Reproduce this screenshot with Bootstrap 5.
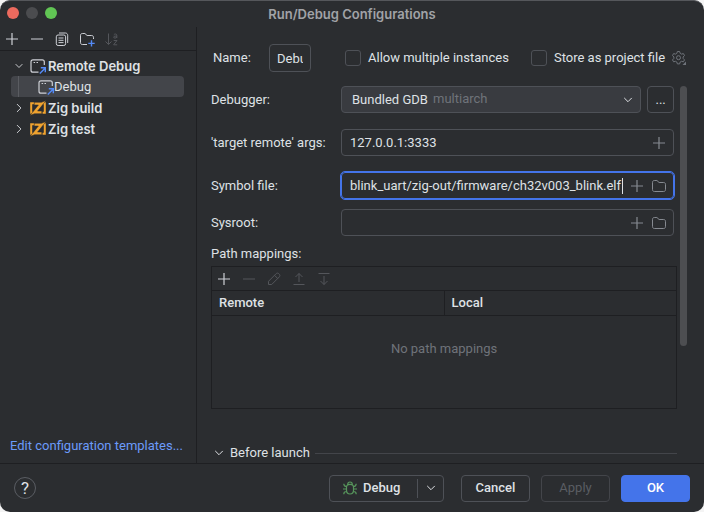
<!DOCTYPE html>
<html lang="en" data-bs-theme="dark">
<head>
<meta charset="utf-8">
<meta name="viewport" content="width=device-width, initial-scale=1">
<title>Run/Debug Configurations</title>
<link href="https://cdn.jsdelivr.net/npm/bootstrap@5.3.0/dist/css/bootstrap.min.css" rel="stylesheet">
<style>
:root{--ground:#2b2d30;--edge:#1e1f22;--line:#4e5157;--ink:#dfe1e5;--dim:#6f737a;--off:#54565b;--accent:#4474ea}
html{background:#f4f4f4}
body{background:transparent;color:var(--ink);font:13px/20px Roboto,"Liberation Sans",sans-serif}
svg{display:block;fill:none;stroke:currentColor;flex:none}
button{color:inherit;font:inherit;background:none;border:0;padding:0}
.dialog{background:var(--ground);border-radius:10px;border-top:1px solid #55575b;overflow:hidden}
.titlebar{height:26px;color:#a1a3a7}
.titlebar,.node.fw-semibold{font-family:Inter,"Liberation Sans",sans-serif}
.lights{left:7px;top:6px;gap:7px}
.light{width:12px;height:12px;border-radius:50%}
.light-close{background:#ec6a5e}.light-min{background:#4b4c4f}.light-zoom{background:#61c554}
.sidebar{width:197px;border-right:1px solid var(--edge)}
.toolbar{height:24px;border-bottom:1px solid var(--edge);padding:0 4px;gap:9px;color:#ced0d6}
.off{color:var(--off)}
.tree{padding:4px 12px 0 11px}
.node{height:21px;padding-left:1px;border-radius:4px;gap:2px}
.node .chev{margin-right:2px}
.leaf{padding-left:27px;gap:0}
.leaf.picked{background:#43454a}
.guide{width:1px;background:#5a5c61;left:7px;top:0;bottom:0}
.zig{color:#f0a32f}
.templates{color:#6b9bfa;padding:0 10px 7px}
.pane{padding:17px 17px 0 14px}
.name-row{height:28px;padding-left:2px}
.name-label{width:56px}
.field{height:27px;border:1px solid var(--line);border-radius:4px;color:var(--ink);padding:0 7px;font:inherit;background:var(--ground)}
.name-field{width:42px;height:28px}
.form-check-input.box{width:16px;height:16px;margin:0;border:1px solid var(--line);border-radius:3px;background-color:transparent}
.tick{gap:7px}
.multi{margin-left:34px}
.store{margin-left:22px}
.gear{margin-left:6px;color:var(--dim)}
.settings{margin-top:14px;gap:3px}
.scrollbar{width:7px;height:260px;border-radius:4px;background:#4d4e51}
.setting>label{width:130px;flex:none}
.setting{height:27px;margin-right:3px}
.gap-l{margin-top:16px}.gap-m{margin-top:10px}
.picker{position:relative}
.picker select{appearance:none;width:100%;background:#393b40;padding-left:10px;color:var(--ink)}
.hint{left:92px;top:3px;color:var(--dim);pointer-events:none}
.picker svg{position:absolute;right:5px;top:6px;pointer-events:none}
.more{width:27px;height:27px;border:1px solid var(--line);border-radius:4px;margin-left:6px}
.combo{gap:6px;padding:0 6px 0 0;color:#868a91}
.combo input{border:0;background:transparent;color:var(--ink);outline:0;padding:0 0 0 8px;font:inherit;min-width:0;height:23px}
.combo.focused{outline:1px solid var(--accent);border-color:var(--accent)}
.combo.focused input{background:linear-gradient(var(--ink),var(--ink)) right center/1px 16px no-repeat}
.mapping-label{margin-top:8px}
.mappings{border:1px solid var(--edge);margin-top:2px;height:143px}
.mappings table{width:100%;table-layout:fixed;border-collapse:collapse}
.mappings th{height:24px;font-weight:500;padding:0 7px;border-bottom:1px solid var(--edge)}
.mappings th+th{border-left:1px solid var(--edge)}
.empty{height:68px;text-align:center;vertical-align:middle;color:var(--dim)}
.launch{margin-top:34px;gap:3px}
.launch hr{margin:0 0 0 2px;border-color:#43454a;opacity:1}
.actions{height:49px;border-top:1px solid var(--edge);padding:0 14px}
.help{width:22px;height:22px;border:1px solid #5a5d63;border-radius:50%;font-size:17px}
.act-row{gap:11px}
.act{height:27px;border:1px solid var(--line);border-radius:4px;min-width:69px;font-weight:500}
.act:disabled{color:#5a5d63;border-color:#43454a;font-weight:400}
.act-ok{background:var(--accent);border-color:var(--accent);color:#fff}
.split{width:115px;border:1px solid var(--line);border-radius:4px;height:27px;margin-right:17px}
.split-main{gap:5px;padding-left:12px;font-weight:500}
.split-drop{border-left:1px solid var(--line);width:26px;height:19px}
</style>
<script src="https://cdn.jsdelivr.net/npm/bootstrap@5.3.0/dist/js/bootstrap.bundle.min.js"></script>
</head>
<body>
<svg class="d-none" xmlns="http://www.w3.org/2000/svg">
<symbol id="plus" viewBox="0 0 16 16"><path d="M8 2v12M2 8h12" stroke-width="1.200"/></symbol>
<symbol id="minus" viewBox="0 0 16 16"><path d="M2 8h12" stroke-width="1.200"/></symbol>
<symbol id="down" viewBox="0 0 16 16"><path d="m4.500 6.200 3.500 3.500 3.500-3.500" stroke-linecap="round"/></symbol>
<symbol id="right" viewBox="0 0 16 16"><path d="m6 3.800 4.200 4.200-4.200 4.200" stroke-linecap="round"/></symbol>
<symbol id="folder" viewBox="0 0 16 16"><path d="M1.500 4.300c0-1 .7-1.800 1.800-1.800h2.600l2.200 2h4.600c1 0 1.800.7 1.800 1.800v5.400c0 1-.7 1.800-1.800 1.800H3.300c-1 0-1.800-.7-1.800-1.800z"/></symbol>
<symbol id="remote" viewBox="0 0 16 16"><path d="M14.300 7V3.800c0-1.100-.8-2-2-2H3c-1.100 0-2 .9-2 2v8.400c0 1.100.9 2 2 2h5.500M3.600 4.500h1.500M6.500 4.500h1.500" stroke="#ced0d6" stroke-width="1.200"/><path d="m9.800 15.400 5-5M10.800 9.800h4.500v4.500" stroke="#548af7" stroke-width="1.400"/></symbol>
<symbol id="zig" viewBox="0 0 16 16"><path d="M4 3.300H1.200v9.400h2M12.500 12.700h2.300V3.300H13" stroke-width="2"/><path d="M4.200 2.300h7.300L16 .5 7.600 11h4.200v2.700H4.500L0 15.500 8.400 5H4.200z" fill="currentColor" stroke="#2b2d30" stroke-width=".5"/></symbol>
</svg>
<div class="dialog d-flex flex-column min-vh-100">
  <header class="titlebar position-relative d-flex align-items-center justify-content-center fw-semibold">
    <div class="lights position-absolute d-flex">
      <button class="light light-close" aria-label="Close"></button><button class="light light-min" aria-label="Minimize"></button><button class="light light-zoom" aria-label="Zoom"></button>
    </div>
    <span>Run/Debug Configurations</span>
  </header>
  <div class="d-flex flex-grow-1">
    <aside class="sidebar d-flex flex-column flex-shrink-0">
      <div class="toolbar d-flex align-items-center">
        <button aria-label="Add"><svg width="16" height="16"><use href="#plus"/></svg></button>
        <button aria-label="Remove"><svg width="16" height="16"><use href="#minus"/></svg></button>
        <button aria-label="Copy"><svg width="16" height="16" viewBox="0 0 16 16"><path d="M5 2h6.500c1.200 0 2.200 1 2.200 2.200V12M4.500 7h5M4.500 9.300h5M4.500 11.600h5"/><rect x="2.300" y="4" width="9.300" height="10.500" rx="1.800"/></svg></button>
        <button aria-label="New folder"><svg width="16" height="16" viewBox="0 0 16 16"><path d="M14.500 8V6.300c0-1-.7-1.800-1.800-1.800H8.100l-2.200-2H3.300c-1.100 0-1.800.8-1.800 1.800v7.400c0 1 .7 1.800 1.800 1.800H8"/><path d="M12.500 9.200v6.400M9.300 12.400h6.400" stroke="#548af7" stroke-width="1.400"/></svg></button>
        <button class="off" aria-label="Sort" disabled><svg width="16" height="16" viewBox="0 0 16 16"><path d="M4.500 2.500v11M1.500 10.500l3 3 3-3M9.800 3.800c.8-1.200 3-1 3 .5V7M12.800 5.200c-1-.3-3.200-.1-3.200 1 0 1.200 2.600 1.100 3.200 0M9.700 9.500H13l-3.400 4.300h3.600"/></svg></button>
      </div>
      <div class="tree flex-grow-1">
        <div class="node d-flex align-items-center fw-semibold"><svg class="chev" width="14" height="14"><use href="#down"/></svg><svg width="16" height="16"><use href="#remote"/></svg>Remote Debug</div>
        <div class="node leaf picked position-relative d-flex align-items-center"><i class="guide position-absolute"></i><svg width="16" height="16"><use href="#remote"/></svg>Debug</div>
        <div class="node d-flex align-items-center fw-semibold"><svg class="chev" width="14" height="14"><use href="#right"/></svg><svg class="zig" width="16" height="16"><use href="#zig"/></svg>Zig build</div>
        <div class="node d-flex align-items-center fw-semibold"><svg class="chev" width="14" height="14"><use href="#right"/></svg><svg class="zig" width="16" height="16"><use href="#zig"/></svg>Zig test</div>
      </div>
      <a class="templates text-decoration-none text-nowrap" href="#">Edit configuration templates...</a>
    </aside>
    <main class="pane flex-grow-1">
      <div class="name-row d-flex align-items-center text-nowrap">
        <label class="name-label flex-shrink-0" for="name">Name:</label>
        <input class="field name-field" id="name" value="Debug">
        <div class="tick multi d-flex align-items-center"><input class="form-check-input box" type="checkbox" id="multi"><label for="multi">Allow multiple instances</label></div>
        <div class="tick store d-flex align-items-center"><input class="form-check-input box" type="checkbox" id="store"><label for="store">Store as project file</label></div>
        <button class="gear" aria-label="Storage settings"><svg width="16" height="16" viewBox="0 0 16 16"><path d="M6.400 1.500h2.200l.6 1.900 1.200.7 2-.5 1.100 1.900-1.400 1.500v1.400l1.400 1.500-1.100 1.900-2-.5-1.200.7-.6 1.900H6.400l-.6-1.900-1.200-.7-2 .5-1.100-1.900 1.400-1.500V7L1.500 5.500l1.100-1.900 2 .5 1.200-.7z"/><circle cx="7.500" cy="7.700" r="2"/><path d="M15 11.500V15h-3.500z" fill="currentColor" stroke="none"/></svg></button>
      </div>
      <div class="settings d-flex">
        <div class="flex-grow-1">
          <div class="setting d-flex align-items-center">
            <label for="debugger">Debugger:</label>
            <div class="picker flex-grow-1"><select class="field" id="debugger"><option>Bundled GDB</option></select><span class="hint position-absolute">multiarch</span><svg width="16" height="16"><use href="#down"/></svg></div>
            <button class="more" aria-label="More">...</button>
          </div>
          <div class="setting gap-l d-flex align-items-center">
            <label for="args">'target remote' args:</label>
            <div class="field combo flex-grow-1 d-flex align-items-center"><input class="flex-grow-1" id="args" value="127.0.0.1:3333"><button aria-label="Insert macro"><svg width="16" height="16"><use href="#plus"/></svg></button></div>
          </div>
          <div class="setting gap-l d-flex align-items-center">
            <label for="symbol">Symbol file:</label>
            <div class="field combo focused flex-grow-1 d-flex align-items-center"><input class="flex-grow-1" id="symbol" value="blink_uart/zig-out/firmware/ch32v003_blink.elf"><button aria-label="Insert macro"><svg width="16" height="16"><use href="#plus"/></svg></button><button aria-label="Browse"><svg width="16" height="16"><use href="#folder"/></svg></button></div>
          </div>
          <div class="setting gap-m d-flex align-items-center">
            <label for="sysroot">Sysroot:</label>
            <div class="field combo flex-grow-1 d-flex align-items-center"><input class="flex-grow-1" id="sysroot"><button aria-label="Insert macro"><svg width="16" height="16"><use href="#plus"/></svg></button><button aria-label="Browse"><svg width="16" height="16"><use href="#folder"/></svg></button></div>
          </div>
          <div class="mapping-label">Path mappings:</div>
          <div class="mappings">
            <div class="toolbar d-flex align-items-center">
              <button aria-label="Add"><svg width="16" height="16"><use href="#plus"/></svg></button>
              <button class="off" aria-label="Remove" disabled><svg width="16" height="16"><use href="#minus"/></svg></button>
              <button class="off" aria-label="Edit" disabled><svg width="16" height="16" viewBox="0 0 16 16"><path d="m2.500 10.300 7.600-7.600c.8-.8 1.900-.8 2.700 0l.5.500c.8.8.8 1.900 0 2.700l-7.600 7.600H2.500zM8.500 4.300l3.200 3.200"/></svg></button>
              <button class="off" aria-label="Move up" disabled><svg width="16" height="16" viewBox="0 0 16 16"><path d="M2.500 13.500h11M8 11V2.500M4.500 6 8 2.500 11.500 6"/></svg></button>
              <button class="off" aria-label="Move down" disabled><svg width="16" height="16" viewBox="0 0 16 16"><path d="M2.500 2.500h11M8 5v8.500M4.500 10 8 13.500l3.500-3.500"/></svg></button>
            </div>
            <table><thead><tr><th>Remote</th><th>Local</th></tr></thead><tbody><tr><td class="empty" colspan="2">No path mappings</td></tr></tbody></table>
          </div>
          <div class="launch d-flex align-items-center"><svg width="16" height="16"><use href="#down"/></svg><span>Before launch</span><hr class="flex-grow-1"></div>
        </div>
        <div class="scrollbar flex-shrink-0"></div>
      </div>
    </main>
  </div>
  <footer class="actions d-flex align-items-center">
    <button class="help me-auto d-flex align-items-center justify-content-center" aria-label="Help">?</button>
    <div class="split d-flex align-items-center">
      <button class="split-main flex-grow-1 d-flex align-items-center"><svg width="16" height="16" viewBox="0 0 16 16"><path d="M4.500 7.300C4.500 5 6 4.300 8 4.300s3.500.7 3.500 3v3C11.500 12.700 10 14 8 14s-3.500-1.300-3.500-3.700zM5.700 4.500C5.700 2.900 6.600 2 8 2s2.300.9 2.300 2.500M1 9h3.500M11.500 9H15M1.800 3.800c0 1.700.9 2.700 2.700 2.700M14.200 3.800c0 1.700-.9 2.700-2.700 2.700M1.800 14.200c0-1.700.9-2.700 2.700-2.700M14.200 14.200c0-1.700-.9-2.700-2.700-2.700" stroke="#57965c" stroke-width="1.200"/></svg>Debug</button>
      <button class="split-drop d-flex align-items-center justify-content-center" aria-label="More run options"><svg width="16" height="16"><use href="#down"/></svg></button>
    </div>
    <div class="act-row d-flex">
      <button class="act">Cancel</button>
      <button class="act" disabled>Apply</button>
      <button class="act act-ok">OK</button>
    </div>
  </footer>
</div>
</body>
</html>
